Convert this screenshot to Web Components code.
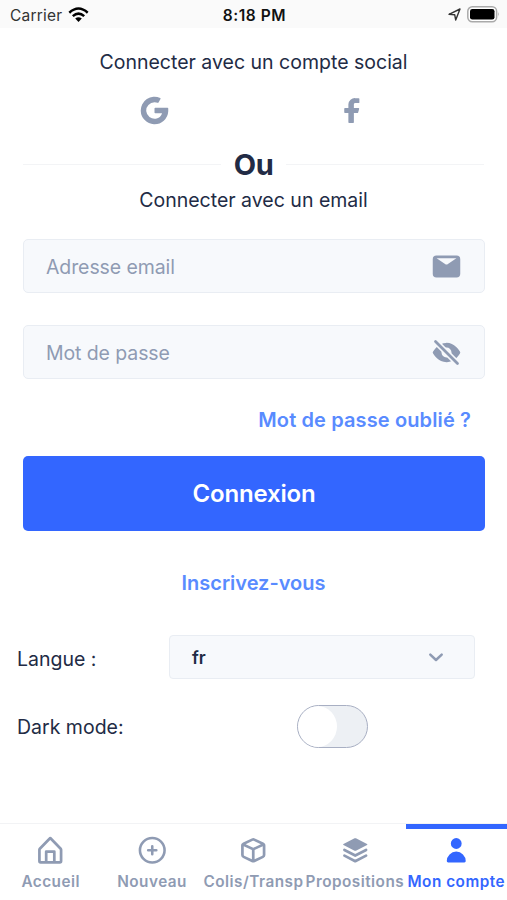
<!DOCTYPE html>
<html lang="fr">
<head>
<meta charset="utf-8">
<title>Mon compte</title>
<style>
html,body{margin:0;height:100%;background:#fff}
body{font-family:Inter,"Liberation Sans",sans-serif;color:#222b45;overflow:hidden}
</style>
</head>
<body>
<login-screen></login-screen>
<script>
const define = (name, html) => customElements.define(name, class extends HTMLElement {
  connectedCallback() {
    if (this.shadowRoot) return;
    const t = document.createElement('template');
    t.innerHTML = typeof html === 'function' ? html(this) : html;
    this.attachShadow({ mode: 'open' }).append(t.content.cloneNode(true));
  }
});

const ICONS = {
  google: '<path d="M17.5 14a5.51 5.51 0 0 1-4.5 3.93 6.15 6.15 0 0 1-7-5.45A6 6 0 0 1 12 6a6.12 6.12 0 0 1 2.27.44.5.5 0 0 0 .64-.21l1.44-2.65a.52.52 0 0 0-.23-.7A10 10 0 0 0 2 12.29 10.12 10.12 0 0 0 11.57 22 10 10 0 0 0 22 12.52v-2a.51.51 0 0 0-.5-.5h-9a.5.5 0 0 0-.5.5v3a.5.5 0 0 0 .5.5z"/>',
  facebook: '<path d="M17 3.5a.5.5 0 0 0-.5-.5H14a4.77 4.77 0 0 0-5 4.5v2.7H6.5a.5.5 0 0 0-.5.5v2.6a.5.5 0 0 0 .5.5H9v6.7a.5.5 0 0 0 .5.5h3a.5.5 0 0 0 .5-.5v-6.7h2.62a.5.5 0 0 0 .49-.37l.72-2.6a.5.5 0 0 0-.48-.63H13V7.5a1 1 0 0 1 1-.9h2.5a.5.5 0 0 0 .5-.5z"/>',
  email: '<path fill-rule="evenodd" d="M19.3 4H4.7A2.7 2.7 0 0 0 2 6.7v10.6A2.7 2.7 0 0 0 4.7 20h14.6a2.7 2.7 0 0 0 2.7-2.7V6.7A2.7 2.7 0 0 0 19.3 4zM19.2 6l-6.700 4.470a1 1 0 0 1-1 0L4.800 6z"/>',
  'eye-off': '<mask id="m"><rect width="24" height="24" fill="#fff"/><circle cx="12" cy="12" r="3.6" fill="#000"/><circle cx="12" cy="12" r="1.8" fill="#fff"/><path d="M2 2l20 20" stroke="#000" stroke-width="4.4"/></mask><path mask="url(#m)" d="M21.87 11.5c-.64-1.11-4.16-6.68-10.14-6.5-5.53.14-8.73 5-9.6 6.5a1 1 0 0 0 0 1c.63 1.09 4 6.5 9.89 6.5h.25c5.53-.14 8.74-5 9.6-6.5a1 1 0 0 0 0-1z"/><path d="M4.71 3.29a1 1 0 0 0-1.42 1.42l16 16a1 1 0 0 0 1.42 0 1 1 0 0 0 0-1.42z"/>',
  chevron: '<path d="M6.300 9.600L12 15l5.700-5.400" fill="none" stroke="currentColor" stroke-width="2.500" stroke-linecap="round" stroke-linejoin="round"/>',
  home: '<path d="M20.42 10.18L12.71 2.3a1 1 0 0 0-1.42 0l-7.71 7.89A2 2 0 0 0 3 11.62V20a2 2 0 0 0 1.89 2h14.22A2 2 0 0 0 21 20v-8.38a2.07 2.07 0 0 0-.58-1.44zM10 20v-6h4v6zm9 0h-3v-7a1 1 0 0 0-1-1H9a1 1 0 0 0-1 1v7H5v-8.42l7-7.15 7 7.19z"/>',
  plus: '<g fill="none" stroke="currentColor" stroke-width="1.900" stroke-linecap="round"><circle cx="12" cy="12" r="9.100"/><path d="M12 9v6M9 12h6"/></g>',
  cube: '<path d="M20.66 7.26c0-.07-.1-.14-.15-.21l-.09-.1a2.5 2.5 0 0 0-.86-.68l-6.4-3a2.7 2.7 0 0 0-2.26 0l-6.4 3a2.6 2.6 0 0 0-.86.68L3.52 7a1 1 0 0 0-.15.2A2.39 2.39 0 0 0 3 8.46v7.06a2.49 2.49 0 0 0 1.46 2.26l6.4 3a2.7 2.7 0 0 0 2.27 0l6.4-3A2.49 2.49 0 0 0 21 15.54V8.46a2.39 2.39 0 0 0-.34-1.2zm-8.95-2.2a.73.73 0 0 1 .58 0l5.33 2.48L12 10.15 6.38 7.54zM5.3 16a.47.47 0 0 1-.3-.43V9.1l6 2.79v6.72zm13.39 0L13 18.61v-6.72l6-2.79v6.44a.48.48 0 0 1-.31.46z"/>',
  layers: '<path d="M3.3 7.300l8.200-4.100a1 1 0 0 1 1 0l8.200 4.100q.6.400 0 .8l-8.200 4.200a1 1 0 0 1-1 0L3.300 8.100q-.6-.4 0-.8z"/><path d="M4 11.800l8 4.100 8-4.100M4 16l8 4.100 8-4.100" fill="none" stroke="currentColor" stroke-width="2" stroke-linecap="round" stroke-linejoin="round"/>',
  person: '<path d="M12 11a4 4 0 1 0-4-4 4 4 0 0 0 4 4zm6 10a1 1 0 0 0 1-1 7 7 0 0 0-14 0 1 1 0 0 0 1 1z"/>'
};

define('ui-icon', el => `<style>:host{display:block;flex:none;width:var(--size,33px);height:var(--size,33px)}svg{display:block;width:100%;height:100%;fill:currentColor}</style>
<svg viewBox="0 0 24 24">${ICONS[el.getAttribute('name')]}</svg>`);

define('status-bar', `<style>
:host{display:grid;grid-template-columns:1fr auto 1fr;align-items:center;height:28px;padding:2px 7px 0 10px;background:#fafafa;color:#333;font-size:15.5px;box-sizing:border-box}
.l,.r{display:flex;align-items:center;gap:6px}.r{justify-content:flex-end;margin-top:-1px}
.c{font-weight:600;color:#111;letter-spacing:.55px;margin-right:-1px;transform:translateX(-1px)}
.l span{letter-spacing:.2px}
svg{display:block}
.l svg{margin-top:-1px}
</style>
<div class="l"><span>Carrier</span>
<svg width="21" height="16" viewBox="0 0 21 16"><g fill="none" stroke="#000" stroke-width="2.5"><path d="M1.300 5.700Q10.500-2.600 19.700 5.700"/><path d="M4.800 9.200Q10.500 4 16.200 9.200"/></g><path d="M7.200 11.500Q10.500 8.800 13.800 11.500L10.500 15z"/></svg></div>
<div class="c">8:18 PM</div>
<div class="r"><svg width="13" height="13" viewBox="0 0 13 13"><path d="M1 6.300L12 1 7.700 12 6.700 6.700z" fill="none" stroke="#333" stroke-width="1.400" stroke-linejoin="round"/></svg>
<svg width="33" height="17" viewBox="0 0 33 17"><rect x=".8" y=".8" width="28.800" height="15" rx="4.500" fill="#fff" stroke="#aaa" stroke-width="1.500"/><rect x="3" y="3" width="24.500" height="10.600" rx="2.300"/><path d="M31 6q1.800 2.300 0 4.600z" fill="#aaa"/></svg></div>`);

define('social-row', `<style>:host{display:grid;grid-template-columns:1fr 1fr;justify-items:center;height:33px;margin:18.500px 56px 0 55px;color:#8f9bb3}</style><ui-icon name="google"></ui-icon><ui-icon name="facebook"></ui-icon>`);

define('or-divider', `<style>:host{display:flex;align-items:center;height:36px;margin:19.500px 23px 0;gap:13px;font-weight:700;font-size:29px;letter-spacing:-.4px}i{flex:1;height:1px;background:#f3f4f6}</style><i></i><span><slot></slot></span><i></i>`);

define('form-field', el => `<style>:host{display:flex;align-items:center;justify-content:space-between;box-sizing:border-box;height:54px;margin:0 22px 32px 23px;padding:0 21px 0 22px;border:1.5px solid #e9edf3;border-radius:5px;background:#f7f9fc;color:#8f9bb3;font-size:19.5px;letter-spacing:-.1px}span{padding-top:1px}</style><span><slot></slot></span><ui-icon name="${el.getAttribute('icon')}"></ui-icon>`);

define('primary-button', `<style>:host{display:flex;align-items:center;justify-content:center;height:75px;margin:0 22px 0 23px;background:#3366ff;border-radius:5px}button{all:unset;color:#fff;font-weight:600;font-size:24px;letter-spacing:-.2px}</style><button><slot></slot></button>`);

define('language-select', `<style>:host{display:flex;align-items:center;justify-content:space-between;box-sizing:border-box;width:306px;height:44px;padding:0 26px 0 22px;border:1.5px solid #e9edf3;border-radius:4px;background:#f7f9fc;font-weight:600;font-size:17.500px}ui-icon{color:#8f9bb3;--size:24px}</style><span><slot></slot></span><ui-icon name="chevron"></ui-icon>`);

define('toggle-switch', `<style>:host{display:flex;box-sizing:border-box;width:71px;height:43px;border:1.5px solid #a8afc3;border-radius:22px;background:#edf0f4;overflow:hidden}i{width:39px;height:41px;border-radius:50%;background:#fff}</style><i></i>`);

define('setting-row', `<style>:host{display:grid;grid-template-columns:152px 1fr;align-items:center;padding-left:17px;font-size:19.5px}.v{display:flex}span{padding-top:var(--drop,0)}</style><span><slot></slot></span><div class="v"><slot name="value"></slot></div>`);

define('tab-item', el => `<style>:host{display:flex;flex-direction:column;align-items:center;min-width:0;height:76px;box-sizing:border-box;padding-top:5px;border-top:5px solid transparent;color:#8f9bb3;font-weight:600;font-size:15.300px;white-space:nowrap;letter-spacing:.5px}:host([active]){color:#3366ff;border-color:#3366ff}span{margin-top:5px;line-height:20px}ui-icon{--size:32.500px}</style><ui-icon name="${el.getAttribute('icon')}"></ui-icon><span><slot></slot></span>`);

define('tab-bar', `<style>:host{display:grid;grid-template-columns:repeat(5,101.400px);height:77px;border-top:1px solid #f2f3f5;box-sizing:border-box}</style><slot></slot>`);

define('login-screen', `<style>
:host{display:flex;flex-direction:column;width:507px;height:900px;background:#fff}
.t{text-align:center;font-size:19.5px;line-height:26px}
.title{margin-top:21px}
.mail{margin:5px 0 26px}
.link{color:#598bff;font-weight:600;font-size:20px;line-height:26px}
.forgot{text-align:right;margin:-4px 36px 23px 0;letter-spacing:.12px}
.join{text-align:center;margin-top:39px}
.lang{margin-top:39px;--drop:3px}.dark{margin-top:26px}
tab-bar{margin-top:auto}
</style>
<status-bar></status-bar>
<div class="t title">Connecter avec un compte social</div>
<social-row></social-row>
<or-divider>Ou</or-divider>
<div class="t mail">Connecter avec un email</div>
<form-field icon="email">Adresse email</form-field>
<form-field icon="eye-off">Mot de passe</form-field>
<div class="link forgot">Mot de passe oublié ?</div>
<primary-button>Connexion</primary-button>
<div class="link join">Inscrivez-vous</div>
<setting-row class="lang">Langue :<language-select slot="value">fr</language-select></setting-row>
<setting-row class="dark">Dark mode:<toggle-switch slot="value" style="margin-left:128px"></toggle-switch></setting-row>
<tab-bar>
<tab-item icon="home">Accueil</tab-item><tab-item icon="plus">Nouveau</tab-item><tab-item icon="cube">Colis/Transp</tab-item><tab-item icon="layers">Propositions</tab-item><tab-item icon="person" active>Mon compte</tab-item>
</tab-bar>`);
</script>
</body>
</html>
